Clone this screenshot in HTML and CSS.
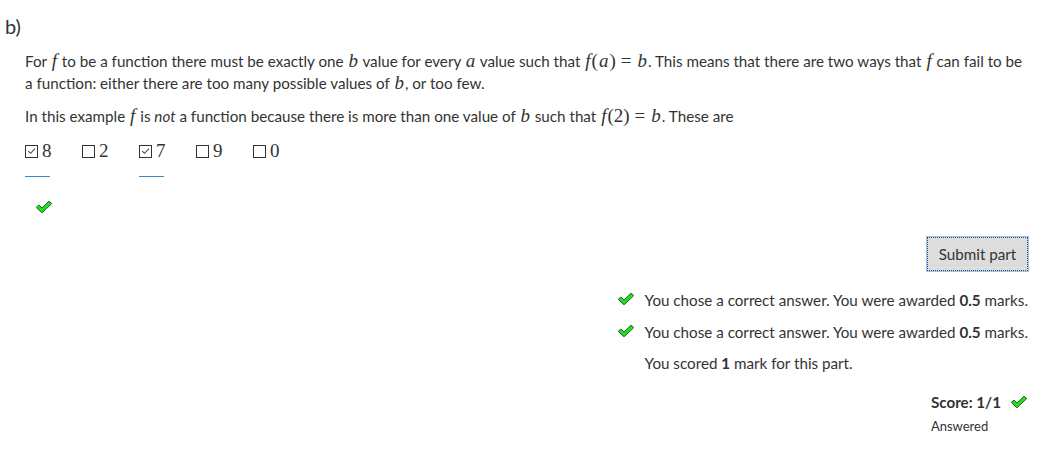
FILE: index.html
```html
<!DOCTYPE html>
<html>
<head>
<meta charset="utf-8">
<link rel="stylesheet" href="styles.css">
</head>
<body>
<div class="part">
  <h4 class="part-name">b)</h4>
  <div class="content">
    <p class="para">For <span class="m">f</span> to be a function there must be exactly one <span class="m">b</span> value for every <span class="m">a</span> value such that <span class="m">f</span><span class="mr">(</span><span class="m">a</span><span class="mr">)</span><span class="mr eq">=</span><span class="m">b</span>. This means that there are two ways that <span class="m">f</span> can fail to be a function: either there are too many possible values of <span class="m">b</span>, or too few.</p>
    <p class="para">In this example <span class="m">f</span> is <em>not</em> a function because there is more than one value of <span class="m">b</span> such that <span class="m">f</span><span class="mr">(2)</span><span class="mr eq">=</span><span class="m">b</span>. These are</p>
    <div class="choices">
      <label class="choice checked"><span class="box"><svg viewBox="0 0 12 12" width="12" height="12"><path d="M2.5 6.2 L5 8.6 L9.8 3.4" fill="none" stroke="#444" stroke-width="1.1"/></svg></span><span class="num">8</span></label>
      <label class="choice"><span class="box"></span><span class="num">2</span></label>
      <label class="choice checked"><span class="box"><svg viewBox="0 0 12 12" width="12" height="12"><path d="M2.5 6.2 L5 8.6 L9.8 3.4" fill="none" stroke="#444" stroke-width="1.1"/></svg></span><span class="num">7</span></label>
      <label class="choice"><span class="box"></span><span class="num">9</span></label>
      <label class="choice"><span class="box"></span><span class="num">0</span></label>
    </div>
    <div class="tick-row">
      <svg class="tick" viewBox="0 0 18 14" width="18" height="14"><path d="M1.2 7.4 L4 5 L7 8 L14 1.2 L16.8 3.6 L7 12.8 Z" fill="#22dd22" stroke="#226622" stroke-width="1" stroke-linejoin="round"/></svg>
    </div>
  </div>
  <div class="actions">
    <button class="submit">Submit part</button>
  </div>
  <div class="feedback-wrap">
    <ul class="feedback">
      <li><svg class="tick fb" viewBox="0 0 18 14" width="18" height="14"><path d="M1.2 7.4 L4 5 L7 8 L14 1.2 L16.8 3.6 L7 12.8 Z" fill="#22dd22" stroke="#226622" stroke-width="1" stroke-linejoin="round"/></svg>You chose a correct answer. You were awarded <strong>0.5</strong> marks.</li>
      <li><svg class="tick fb" viewBox="0 0 18 14" width="18" height="14"><path d="M1.2 7.4 L4 5 L7 8 L14 1.2 L16.8 3.6 L7 12.8 Z" fill="#22dd22" stroke="#226622" stroke-width="1" stroke-linejoin="round"/></svg>You chose a correct answer. You were awarded <strong>0.5</strong> marks.</li>
      <li>You scored <strong>1</strong> mark for this part.</li>
    </ul>
  </div>
  <div class="score-wrap">
    <div class="score">
      <div class="score-line"><strong>Score: 1/1</strong><svg class="tick" viewBox="0 0 18 14" width="18" height="14"><path d="M1.2 7.4 L4 5 L7 8 L14 1.2 L16.8 3.6 L7 12.8 Z" fill="#22dd22" stroke="#226622" stroke-width="1" stroke-linejoin="round"/></svg></div>
      <div class="answered">Answered</div>
    </div>
  </div>
</div>
</body>
</html>
```

FILE: styles.css
```css
html, body {
  margin: 0;
  padding: 0;
  background: #fff;
}
body {
  font-family: Lato, "Open Sans", sans-serif;
  font-size: 15.2px;
  color: #333;
}
.part {
  padding: 14px 28px 0 0;
}
.part-name {
  margin: 0 0 0 5px;
  font-size: 20px;
  font-weight: 400;
  line-height: 24px;
}
.content {
  padding-left: 25px;
  margin-top: 12px;
}
.para {
  margin: 0 0 11px 0;
  line-height: 22px;
}
.m {
  font-family: "Liberation Serif", serif;
  font-style: italic;
  font-size: 19px;
  line-height: 1;
  padding: 0 1px;
}
.mr {
  font-family: "Liberation Serif", serif;
  font-size: 19px;
  line-height: 1;
}
.eq {
  margin: 0 5px;
}
.choices {
  display: flex;
  margin-top: 12px;
  height: 24px;
}
.choice {
  display: flex;
  align-items: center;
  width: 57px;
  height: 24px;
  position: relative;
}
.box {
  width: 11px;
  height: 11px;
  border: 1px solid #333;
  display: inline-flex;
  align-items: center;
  justify-content: center;
  margin-right: 4px;
}
.box svg {
  display: block;
}
.num {
  font-family: "Liberation Serif", serif;
  font-size: 19px;
  color: #333;
}
.choice.checked::after {
  content: "";
  position: absolute;
  left: 0;
  top: 37px;
  width: 25px;
  height: 1px;
  background: #3a8ac8;
}
.tick-row {
  padding-left: 10px;
  margin-top: 36px;
  height: 20px;
}
.tick {
  display: inline-block;
}
.actions {
  display: flex;
  justify-content: flex-end;
  margin-top: 18px;
}
.submit {
  font-family: Lato, "Open Sans", sans-serif;
  font-size: 15.2px;
  color: #333;
  background: #ddd;
  border: 1px dotted #2a4a6a;
  outline: 1px solid #9cc4e8;
  outline-offset: 0;
  padding: 6px 8px;
  height: 34px;
  width: 101px;
}
.feedback-wrap {
  display: flex;
  justify-content: flex-end;
  margin-top: 18px;
}
.feedback {
  list-style: none;
  margin: 0;
  padding: 0;
}
.feedback li {
  position: relative;
  line-height: 22px;
  margin-bottom: 9.5px;
}
.feedback .fb {
  position: absolute;
  left: -28px;
  top: 3px;
}
.score-wrap {
  display: flex;
  justify-content: flex-end;
  margin-top: 7px;
}
.score {
  white-space: nowrap;
}
.score-line {
  display: flex;
  align-items: center;
  gap: 9px;
  line-height: 22px;
}
.answered {
  font-size: 13px;
  margin-top: 5px;
}
```
